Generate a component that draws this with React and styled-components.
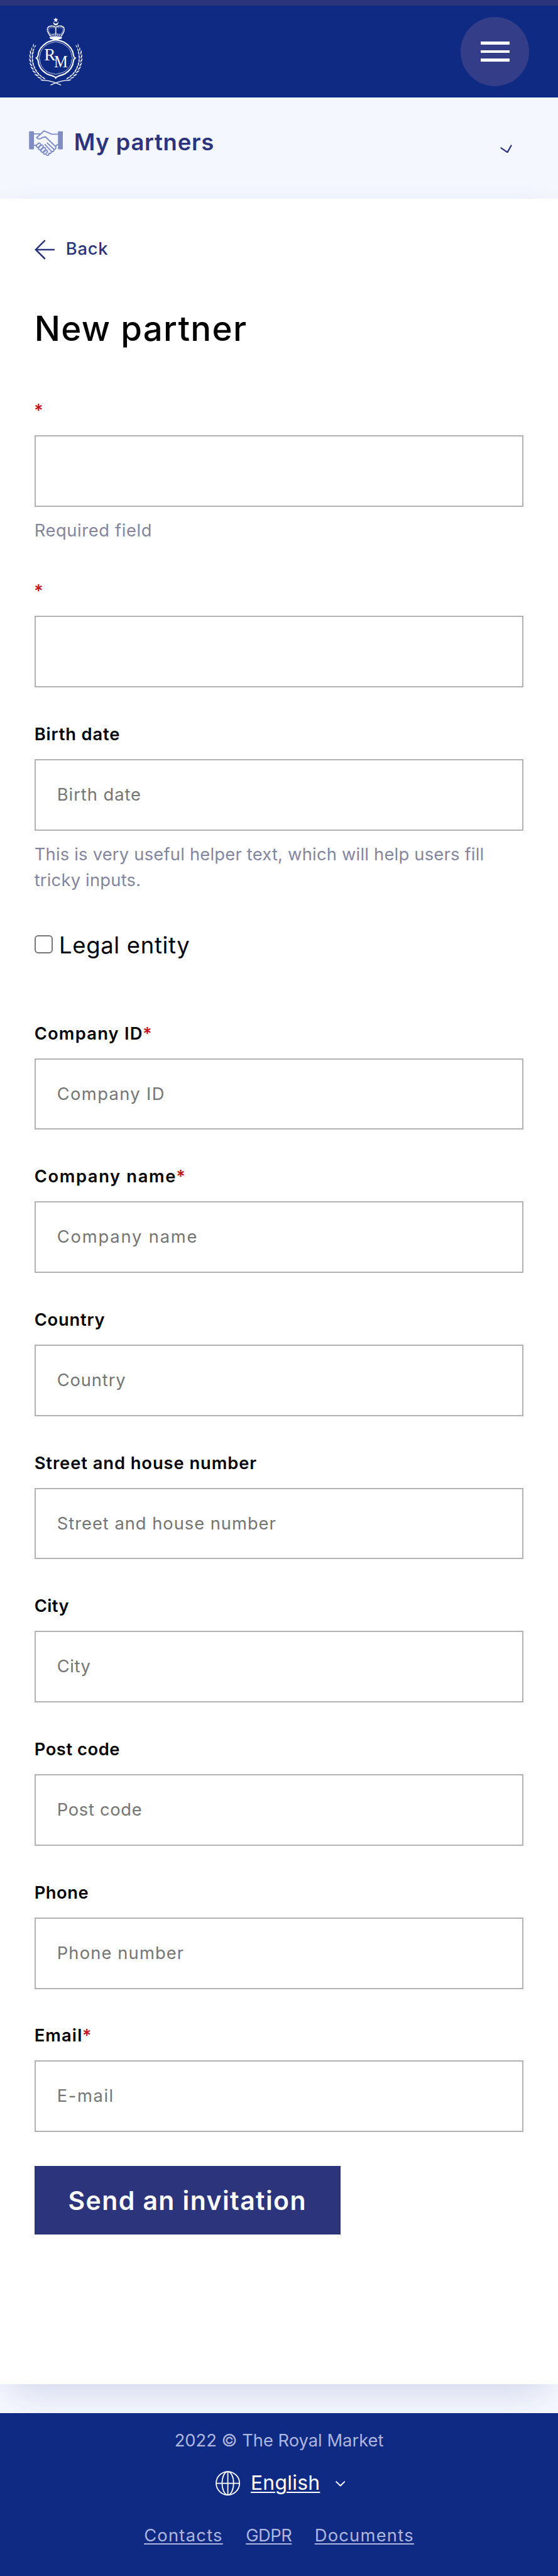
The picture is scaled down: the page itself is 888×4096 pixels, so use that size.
import React from "react";
import styled, { createGlobalStyle } from "styled-components";

/* The design is drawn on a 390-unit wide grid. */
const u = (n) => `${((n * 888) / 390).toFixed(3)}px`;

const color = {
  navy: "#0f2a83",
  indigo: "#2c347c",
  disc: "#333d88",
  pale: "#f4f7fe",
  icon: "#7f8dc4",
  helper: "#84869e",
  border: "#b2b2b2",
  required: "#c3141b",
  footerText: "#aeb5de",
};

const GlobalStyle = createGlobalStyle`
  *, *::before, *::after { box-sizing: border-box; }
  body {
    margin: 0;
    background: ${color.pale};
    color: #000;
    font-family: Inter, "Open Sans", "Liberation Sans", sans-serif;
    font-size: ${u(12)};
    line-height: ${u(18)};
  }
`;

const Page = styled.div`
  display: flex;
  flex-direction: column;
  width: ${u(390)};
  height: 4096px;
  overflow: hidden;
`;

const Header = styled.header`
  display: flex;
  justify-content: space-between;
  align-items: center;
  flex: none;
  height: ${u(68)};
  padding: 0 ${u(20)};
  border-top: ${u(4)} solid ${color.indigo};
  background: ${color.navy};
`;

const Crest = styled.svg`
  display: block;
  width: ${u(37.8)};
  height: ${u(47.4)};
`;

const MenuButton = styled.button`
  display: flex;
  flex-direction: column;
  align-items: center;
  justify-content: center;
  gap: ${u(4)};
  width: ${u(48)};
  height: ${u(48)};
  padding: 0;
  border: 0;
  border-radius: 50%;
  background: ${color.disc};
`;

const MenuLine = styled.span`
  width: ${u(20)};
  height: ${u(2)};
  background: #fff;
`;

const SectionBar = styled.div`
  display: flex;
  align-items: flex-start;
  flex: none;
  height: ${u(71)};
  padding: ${u(19)} ${u(32)} 0 ${u(20)};
`;

const HandshakeIcon = styled.svg`
  width: ${u(24)};
  height: ${u(19)};
  margin-top: ${u(3.5)};
`;

const SectionTitle = styled.div`
  flex: 1;
  margin: ${u(0.5)} 0 0 ${u(7.7)};
  color: ${color.indigo};
  font-size: ${u(16)};
  font-weight: 600;
  line-height: ${u(24)};
  letter-spacing: ${u(0.34)};
`;

const TickIcon = styled.svg`
  width: ${u(8.4)};
  height: ${u(6)};
  margin-top: ${u(13.8)};
`;

const Card = styled.main`
  flex: none;
  height: ${u(1526)};
  padding: ${u(26.2)} ${u(24)} 0;
  background: #fff;
  box-shadow:
    0 ${u(3)} ${u(20)} ${u(-5)} rgba(44, 52, 124, 0.1),
    0 ${u(20)} ${u(24)} ${u(-12)} rgba(44, 52, 124, 0.1);
`;

const BackLink = styled.a`
  display: flex;
  align-items: center;
  gap: ${u(8)};
  color: ${color.indigo};
  font-weight: 500;
  letter-spacing: ${u(0.33)};
`;

const ArrowIcon = styled.svg`
  width: ${u(14)};
  height: ${u(14)};
`;

const Title = styled.h1`
  margin: ${u(28.5)} 0 ${u(29.9)};
  font-size: ${u(24)};
  font-weight: 500;
  line-height: ${u(36)};
  letter-spacing: ${u(0.57)};
`;

const FieldBox = styled.div`
  display: flex;
  flex-direction: column;
  margin-bottom: ${u(23.6)};
`;

const Label = styled.label`
  height: ${u(18)};
  margin-bottom: ${u(8.4)};
  padding-top: ${u(0.5)};
  font-weight: 600;
  letter-spacing: ${(p) => u(p.$tracking)};
`;

const Required = styled.span`
  margin-left: ${u(-0.3)};
  color: ${color.required};
`;

const Input = styled.input`
  width: 100%;
  height: ${u(50)};
  padding: 0 ${u(15)} ${u(0.3)};
  border: ${u(1)} solid ${color.border};
  border-radius: 0;
  background: #fff;
  font: inherit;
  letter-spacing: ${(p) => u(p.$tracking)};

  &::placeholder {
    color: #757575;
    opacity: 1;
  }
`;

const Helper = styled.p`
  margin: ${u(7.9)} 0 ${u(0.1)};
  color: ${color.helper};
  letter-spacing: ${(p) => u(p.$tracking)};
`;

const CheckRow = styled.label`
  display: flex;
  align-items: flex-start;
  gap: ${u(4.3)};
  margin: ${u(24.3)} 0 ${u(40.3)};
  font-size: ${u(16)};
  line-height: ${u(24)};
  letter-spacing: ${u(0.3)};
`;

const Checkbox = styled.input`
  appearance: none;
  width: ${u(13)};
  height: ${u(13)};
  margin: ${u(4.7)} 0 0;
  border: ${u(1)} solid #767676;
  border-radius: ${u(2.5)};
  background: #fff;
`;

const SubmitButton = styled.button`
  width: ${u(214)};
  height: ${u(48)};
  padding: ${u(0.4)} 0 0;
  border: 0;
  background: ${color.indigo};
  color: #fff;
  font: inherit;
  font-size: ${u(18)};
  font-weight: 600;
  letter-spacing: ${u(0.62)};
`;

const Footer = styled.footer`
  position: relative;
  display: flex;
  flex-direction: column;
  align-items: center;
  flex: 1;
  margin-top: ${u(20)};
  padding-top: ${u(10.9)};
  background: ${color.navy};
  color: ${color.footerText};
`;

const LanguagePicker = styled.div`
  display: flex;
  align-items: center;
  margin: ${u(9.6)} 0 ${u(17.5)};
  padding-left: ${u(1.8)};
  color: #fff;
  font-size: ${u(14)};
  line-height: ${u(21)};
`;

const GlobeIcon = styled.svg`
  width: ${u(17.2)};
  height: ${u(17.2)};
`;

const Language = styled.a`
  margin: 0 ${u(10.8)} 0 ${u(7.5)};
  letter-spacing: ${u(0.12)};
  text-decoration: underline;
  text-decoration-thickness: ${u(1)};
  text-underline-offset: ${u(1.2)};
`;

const ChevronIcon = styled.svg`
  width: ${u(6.8)};
  height: ${u(4)};
  margin-top: ${u(1)};
`;

const FooterLinks = styled.nav`
  display: flex;
  gap: ${u(16)};
`;

const FooterLink = styled.a`
  letter-spacing: ${(p) => u(p.$tracking)};
  text-decoration: underline;
  text-decoration-thickness: ${u(1)};
  text-underline-offset: ${u(1.1)};
`;

const identityFields = [
  { required: true, helper: "Required field", helperTracking: 0.27 },
  { required: true },
  {
    label: "Birth date",
    tracking: 0.38,
    placeholder: "Birth date",
    inputTracking: 0.42,
    helper: "This is very useful helper text, which will help users fill tricky inputs.",
    helperTracking: 0.1,
  },
];

const companyFields = [
  { label: "Company ID", tracking: 0.54, placeholder: "Company ID", inputTracking: 0.6, required: true },
  { label: "Company name", tracking: 0.72, placeholder: "Company name", inputTracking: 0.8, required: true },
  { label: "Country", tracking: 0.35, placeholder: "Country", inputTracking: 0.38 },
  { label: "Street and house number", tracking: 0.41, placeholder: "Street and house number", inputTracking: 0.43 },
  { label: "City", tracking: 0.2, placeholder: "City", inputTracking: 0.25 },
  { label: "Post code", tracking: 0.25, placeholder: "Post code", inputTracking: 0.3 },
  { label: "Phone", tracking: 0.25, placeholder: "Phone number", inputTracking: 0.5 },
  { label: "Email", tracking: 0.5, placeholder: "E-mail", inputTracking: 0.7, required: true },
];

function Field({ label, tracking = 0, placeholder, inputTracking = 0, required, helper, helperTracking = 0 }) {
  return (
    <FieldBox>
      <Label $tracking={tracking}>
        {label}
        {required && <Required>*</Required>}
      </Label>
      <Input $tracking={inputTracking} placeholder={placeholder} />
      {helper && <Helper $tracking={helperTracking}>{helper}</Helper>}
    </FieldBox>
  );
}

function Laurel() {
  const leaves = [];
  for (let i = 0; i < 11; i += 1) {
    const deg = 205 - i * 8.8;
    const rad = (deg * Math.PI) / 180;
    const x = 229 + 153 * Math.cos(rad);
    const y = 300 + 155 * Math.sin(rad);
    const s = i < 2 ? 0.8 : 1;
    leaves.push(
      <g key={i} transform={`translate(${x} ${y}) rotate(${deg + 90}) scale(${s})`}>
        <path d="M-4 -3Q10 -17 27 -12Q14 -2 -4 -3Z" />
        <path d="M-4 3Q8 14 25 8Q12 -1 -4 3Z" />
      </g>
    );
  }
  return (
    <g>
      {leaves}
      <path d="M158 441Q215 447 262 472" fill="none" stroke="#fff" strokeWidth="5" />
    </g>
  );
}

function CrestLogo() {
  return (
    <Crest viewBox="60 48 340 426" fill="#fff" aria-label="RM">
      <path d="M229 47L233 57L244 58L236 65L238 76L229 70L220 76L222 65L214 58L225 57Z" />
      <path d="M215 72A16 16 0 1 0 243 72A13 13 0 1 1 215 72Z" />
      <g fill="none" stroke="#fff">
        <g strokeWidth="9" strokeLinecap="round" strokeDasharray="0.1 9.5">
          <path d="M191 158C184 145 176 136 176 121C177 101 204 95 227 106" />
          <path d="M267 158C274 145 282 136 282 121C281 101 254 95 231 106" />
          <path d="M229 110V155" />
        </g>
        <path d="M196 151C187 136 183 130 185 121C188 110 207 107 221 113M262 151C271 136 275 130 273 121C270 110 251 107 237 113" strokeWidth="2" />
        <path d="M190 156Q229 144 268 156M190 169Q229 159 268 169" strokeWidth="3" />
        <path d="M196 162Q229 152 264 162" strokeWidth="6" strokeDasharray="7 6" />
      </g>
      <path d="M189 172Q229 163 269 172L264 181Q247 184 240 187H218Q211 184 194 181Z" />
      <g fill="none" stroke="#fff">
        <path
          strokeWidth="8"
          d="M229 187C212 192 189 194 172 205C139 226 120 253 118 284Q116 297 107 302Q116 307 118 320C120 351 139 380 172 401C191 412 220 412 229 427C238 412 267 412 286 401C319 380 338 351 340 320Q342 307 351 302Q342 297 340 284C338 253 319 226 286 205C269 194 246 192 229 187Z"
        />
        <path
          strokeWidth="3"
          d="M229 199C210 204 193 206 177 216C147 235 131 259 129 287Q128 297 123 302Q128 307 129 317C131 345 147 371 177 389C193 399 216 397 229 405C242 397 265 399 281 389C311 371 327 345 329 317Q330 307 335 302Q330 297 329 287C327 259 311 235 281 216C265 206 248 204 229 199Z"
        />
      </g>
      <g fontFamily="'Liberation Serif', serif" fontSize="112">
        <text x="156" y="318" textLength="72" lengthAdjust="spacingAndGlyphs">R</text>
        <text x="218" y="360" textLength="86" lengthAdjust="spacingAndGlyphs">M</text>
      </g>
      <Laurel />
      <g transform="translate(458 0) scale(-1 1)">
        <Laurel />
      </g>
    </Crest>
  );
}

function Handshake() {
  return (
    <HandshakeIcon viewBox="31 35 215 170" fill="none" stroke={color.icon} strokeWidth="7.5" strokeLinecap="round" strokeLinejoin="round">
      <rect x="32" y="46" width="31" height="113" rx="4" fill={color.icon} stroke="none" />
      <rect x="213" y="46" width="31" height="113" rx="4" fill={color.icon} stroke="none" />
      <path d="M63 62H104M213 64H174L126 43L80 85C88 97 104 95 113 86L134 80L196 139C205 148 199 160 187 158" />
      <path d="M63 133H76M213 130Q203 130 201 137" />
      <path d="M146 119L186 157C193 167 183 176 172 171M132 129L170 169C177 179 166 188 156 183C160 194 149 200 141 193" />
      <g>
        <rect x="-15" y="-9" width="30" height="18" rx="9" transform="translate(91 133) rotate(-46)" />
        <rect x="-17" y="-9" width="34" height="18" rx="9" transform="translate(106 147) rotate(-46)" />
        <rect x="-17" y="-9" width="34" height="18" rx="9" transform="translate(121 162) rotate(-46)" />
        <rect x="-14" y="-8" width="28" height="16" rx="8" transform="translate(135 177) rotate(-46)" />
      </g>
    </HandshakeIcon>
  );
}

export default function App() {
  return (
    <>
      <GlobalStyle />
      <Page>
        <Header>
          <CrestLogo />
          <MenuButton aria-label="Menu">
            <MenuLine />
            <MenuLine />
            <MenuLine />
          </MenuButton>
        </Header>
        <SectionBar>
          <Handshake />
          <SectionTitle>My partners</SectionTitle>
          <TickIcon viewBox="0 0 25 18" fill="none" stroke={color.indigo} strokeWidth="3" strokeLinecap="round" strokeLinejoin="round">
            <path d="M2 7L15 16L23 2" />
          </TickIcon>
        </SectionBar>
        <Card>
          <BackLink>
            <ArrowIcon viewBox="0 0 42 42" fill="none" stroke={color.indigo} strokeWidth="3.4">
              <path d="M42 21H3M22 1.5L2.5 21L22 40.5" />
            </ArrowIcon>
            Back
          </BackLink>
          <Title>New partner</Title>
          {identityFields.map((field, i) => (
            <Field key={i} {...field} />
          ))}
          <CheckRow>
            <Checkbox type="checkbox" />
            Legal entity
          </CheckRow>
          {companyFields.map((field) => (
            <Field key={field.label} {...field} />
          ))}
          <SubmitButton>Send an invitation</SubmitButton>
        </Card>
        <Footer>
          <div>2022 © The Royal Market</div>
          <LanguagePicker>
            <GlobeIcon viewBox="0 0 154 154" fill="none" stroke="currentColor" strokeWidth="7">
              <circle cx="77" cy="77" r="73" />
              <ellipse cx="77" cy="77" rx="36" ry="73" />
              <path d="M77 4V150M4 77H150" />
            </GlobeIcon>
            <Language>English</Language>
            <ChevronIcon viewBox="0 0 20.4 12" fill="none" stroke="currentColor" strokeWidth="2.6" strokeLinecap="round" strokeLinejoin="round">
              <path d="M1.5 1.5L10.2 10L18.9 1.5" />
            </ChevronIcon>
          </LanguagePicker>
          <FooterLinks>
            <FooterLink $tracking={0.55}>Contacts</FooterLink>
            <FooterLink $tracking={-0.22}>GDPR</FooterLink>
            <FooterLink $tracking={0.55}>Documents</FooterLink>
          </FooterLinks>
        </Footer>
      </Page>
    </>
  );
}
